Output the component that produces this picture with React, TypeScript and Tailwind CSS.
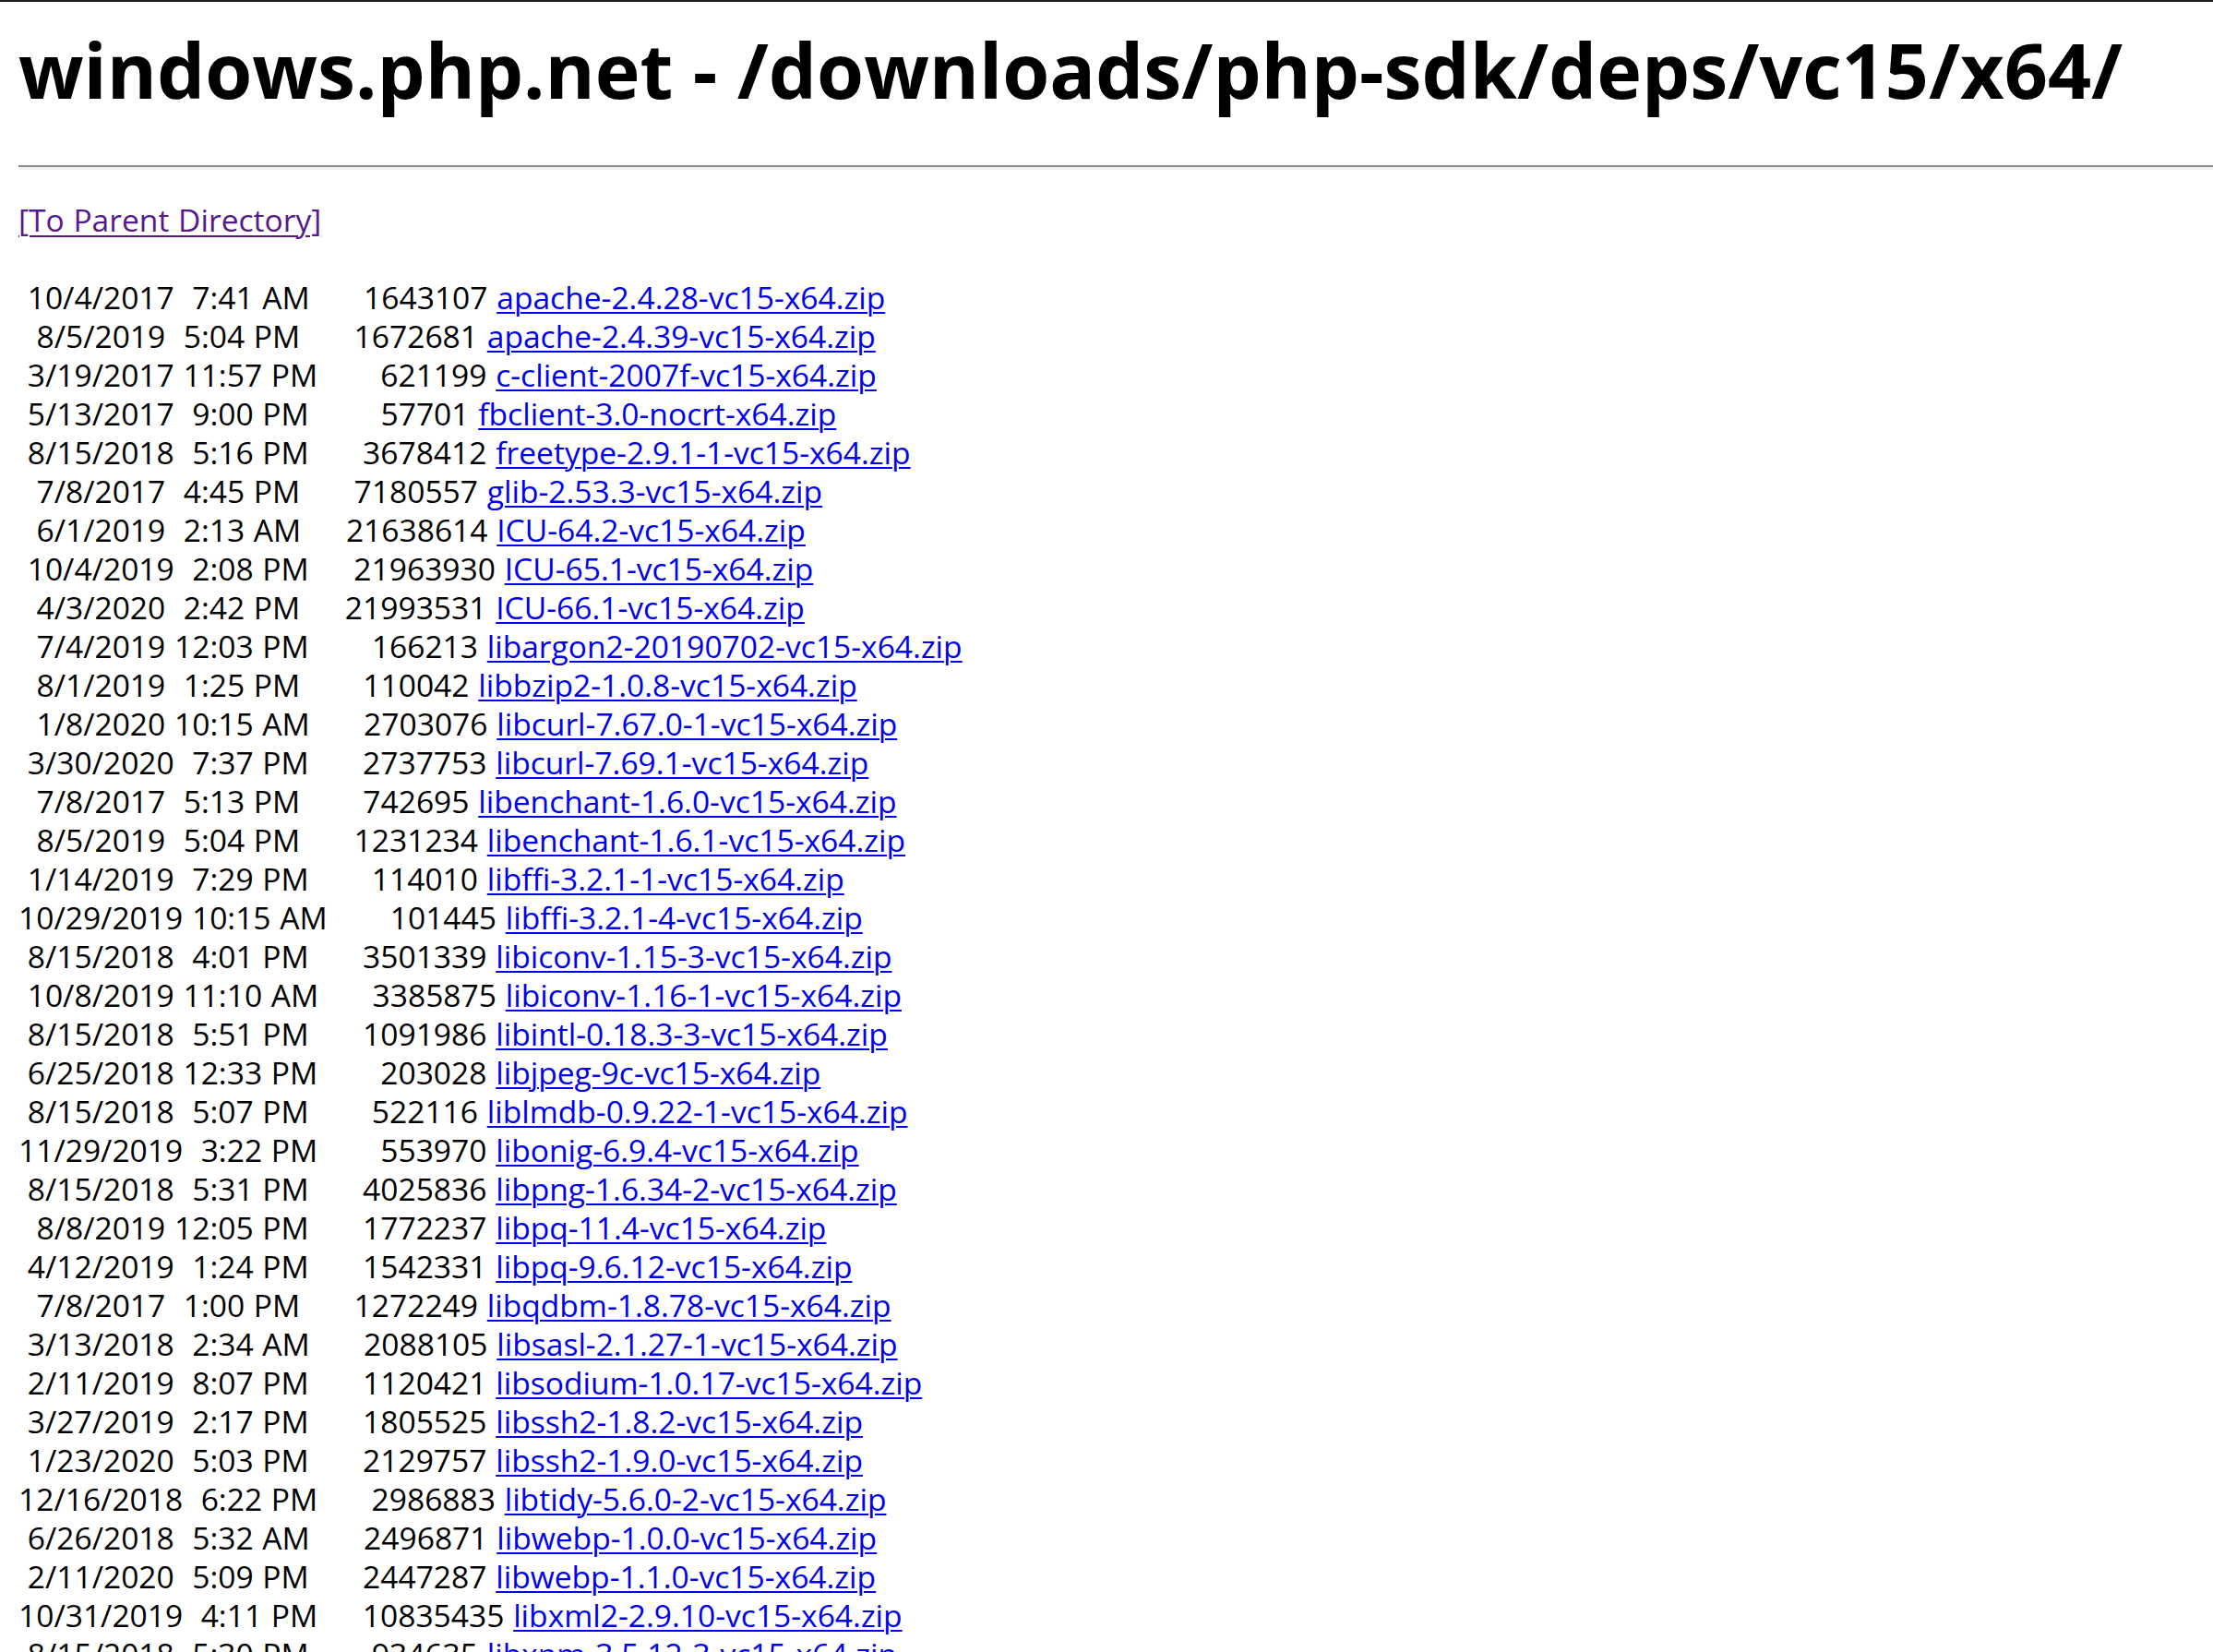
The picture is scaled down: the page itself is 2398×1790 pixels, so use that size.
const FILES: [string, string, string, string][] = [
  ["10/4/2017", "7:41 AM", "1643107", "apache-2.4.28-vc15-x64.zip"],
  ["8/5/2019", "5:04 PM", "1672681", "apache-2.4.39-vc15-x64.zip"],
  ["3/19/2017", "11:57 PM", "621199", "c-client-2007f-vc15-x64.zip"],
  ["5/13/2017", "9:00 PM", "57701", "fbclient-3.0-nocrt-x64.zip"],
  ["8/15/2018", "5:16 PM", "3678412", "freetype-2.9.1-1-vc15-x64.zip"],
  ["7/8/2017", "4:45 PM", "7180557", "glib-2.53.3-vc15-x64.zip"],
  ["6/1/2019", "2:13 AM", "21638614", "ICU-64.2-vc15-x64.zip"],
  ["10/4/2019", "2:08 PM", "21963930", "ICU-65.1-vc15-x64.zip"],
  ["4/3/2020", "2:42 PM", "21993531", "ICU-66.1-vc15-x64.zip"],
  ["7/4/2019", "12:03 PM", "166213", "libargon2-20190702-vc15-x64.zip"],
  ["8/1/2019", "1:25 PM", "110042", "libbzip2-1.0.8-vc15-x64.zip"],
  ["1/8/2020", "10:15 AM", "2703076", "libcurl-7.67.0-1-vc15-x64.zip"],
  ["3/30/2020", "7:37 PM", "2737753", "libcurl-7.69.1-vc15-x64.zip"],
  ["7/8/2017", "5:13 PM", "742695", "libenchant-1.6.0-vc15-x64.zip"],
  ["8/5/2019", "5:04 PM", "1231234", "libenchant-1.6.1-vc15-x64.zip"],
  ["1/14/2019", "7:29 PM", "114010", "libffi-3.2.1-1-vc15-x64.zip"],
  ["10/29/2019", "10:15 AM", "101445", "libffi-3.2.1-4-vc15-x64.zip"],
  ["8/15/2018", "4:01 PM", "3501339", "libiconv-1.15-3-vc15-x64.zip"],
  ["10/8/2019", "11:10 AM", "3385875", "libiconv-1.16-1-vc15-x64.zip"],
  ["8/15/2018", "5:51 PM", "1091986", "libintl-0.18.3-3-vc15-x64.zip"],
  ["6/25/2018", "12:33 PM", "203028", "libjpeg-9c-vc15-x64.zip"],
  ["8/15/2018", "5:07 PM", "522116", "liblmdb-0.9.22-1-vc15-x64.zip"],
  ["11/29/2019", "3:22 PM", "553970", "libonig-6.9.4-vc15-x64.zip"],
  ["8/15/2018", "5:31 PM", "4025836", "libpng-1.6.34-2-vc15-x64.zip"],
  ["8/8/2019", "12:05 PM", "1772237", "libpq-11.4-vc15-x64.zip"],
  ["4/12/2019", "1:24 PM", "1542331", "libpq-9.6.12-vc15-x64.zip"],
  ["7/8/2017", "1:00 PM", "1272249", "libqdbm-1.8.78-vc15-x64.zip"],
  ["3/13/2018", "2:34 AM", "2088105", "libsasl-2.1.27-1-vc15-x64.zip"],
  ["2/11/2019", "8:07 PM", "1120421", "libsodium-1.0.17-vc15-x64.zip"],
  ["3/27/2019", "2:17 PM", "1805525", "libssh2-1.8.2-vc15-x64.zip"],
  ["1/23/2020", "5:03 PM", "2129757", "libssh2-1.9.0-vc15-x64.zip"],
  ["12/16/2018", "6:22 PM", "2986883", "libtidy-5.6.0-2-vc15-x64.zip"],
  ["6/26/2018", "5:32 AM", "2496871", "libwebp-1.0.0-vc15-x64.zip"],
  ["2/11/2020", "5:09 PM", "2447287", "libwebp-1.1.0-vc15-x64.zip"],
  ["10/31/2019", "4:11 PM", "10835435", "libxml2-2.9.10-vc15-x64.zip"],
  ["8/15/2018", "5:30 PM", "934635", "libxpm-3.5.12-3-vc15-x64.zip"],
];

const App = () => {
  return (
    <div className="min-h-screen border-t-2 border-[#1e1e1e] bg-white font-['Open_Sans',sans-serif] text-black">
      <h1 className="pl-[20px] pt-[32px] text-[82.5px] font-bold leading-none">
        windows.php.net - /downloads/php-sdk/deps/vc15/x64/
      </h1>
      <hr className="ml-[20px] mt-[62px] h-[5px] border-0 border-t-2 border-b-[3px] border-t-[#8a8a8a] border-b-[#efefef]" />

      {/* listing, spaces kept like the server's pre block */}
      <div className="mt-[33px] pl-[20px] whitespace-pre text-[33.6px] leading-[42px] [word-spacing:1px]">
        <div>
          <a href="#" className="text-[#551a8b] underline decoration-2 underline-offset-[4px]">
            [To Parent Directory]
          </a>
        </div>
        <div>&nbsp;</div>
        {FILES.map(([date, time, size, name]) => (
          <div key={name}>
            {date.padStart(10) + " " + time.padStart(8) + " " + size.padStart(12) + " "}
            <a href="#" className="text-[#0000ee] underline decoration-2 underline-offset-[3px]">
              {name}
            </a>
          </div>
        ))}
      </div>
    </div>
  );
};

export default App;
